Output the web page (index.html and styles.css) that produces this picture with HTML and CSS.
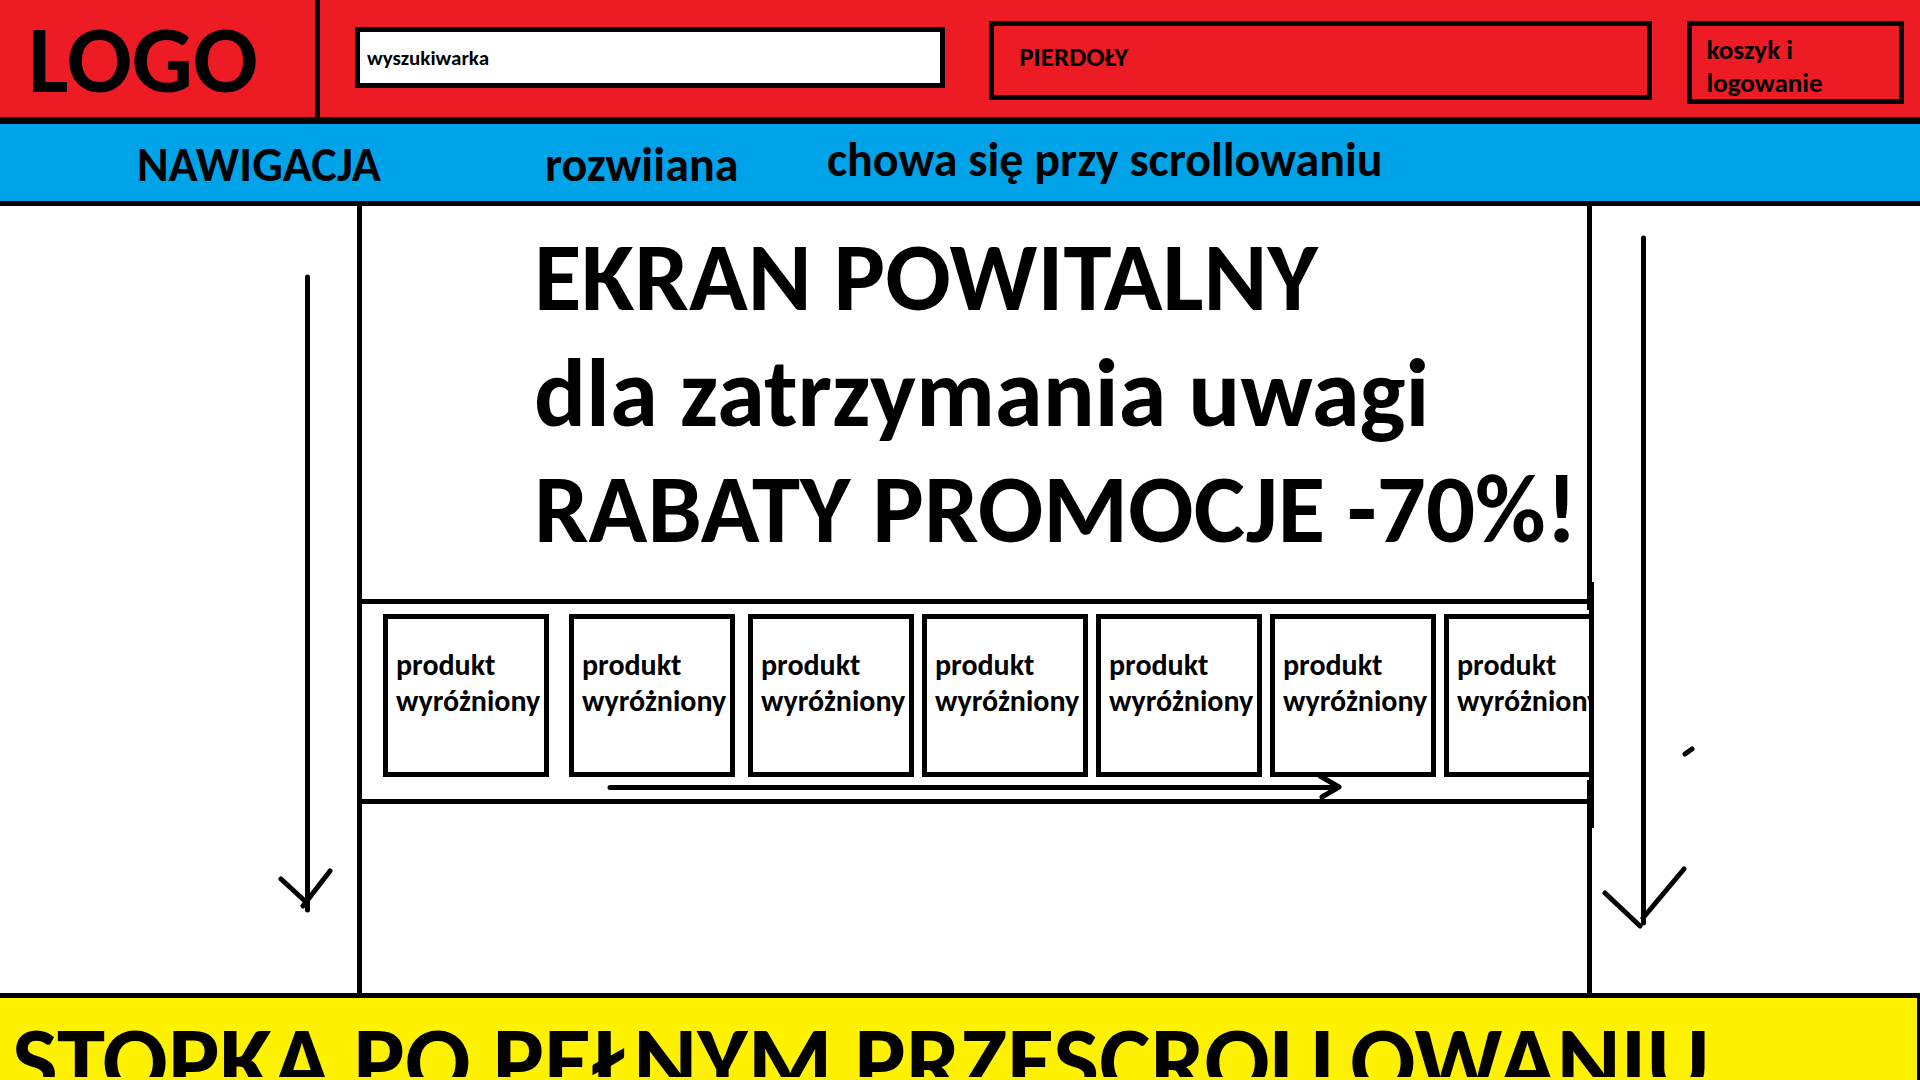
FILE: index.html
```html
<!DOCTYPE html>
<html lang="pl">
<head>
<meta charset="utf-8">
<meta name="viewport" content="width=device-width, initial-scale=1">
<title>LOGO</title>
<link rel="stylesheet" href="styles.css">
</head>
<body>
<header class="header">
  <a class="logo" href="#">LOGO</a>
  <input class="search" type="search" placeholder="wyszukiwarka" aria-label="wyszukiwarka">
  <div class="extras">PIERDOŁY</div>
  <a class="account" href="#">koszyk i logowanie</a>
</header>
<nav class="nav">
  <a class="nav-link nav-main" href="#">NAWIGACJA</a>
  <a class="nav-link nav-dropdown" href="#">rozwijana</a>
  <a class="nav-link nav-note" href="#">chowa się przy scrollowaniu</a>
</nav>
<main class="main">
  <aside class="side side-left">
    <svg class="stroke" width="58" height="642" viewBox="277 272 58 642" aria-hidden="true">
      <path d="M307.500 277V910M281 879L306 902M330 871L303 906"/>
    </svg>
  </aside>
  <div class="panel">
    <section class="hero">
      <h1 class="hero-line">EKRAN POWITALNY</h1>
      <p class="hero-line">dla zatrzymania uwagi</p>
      <p class="hero-line">RABATY PROMOCJE -70%!</p>
    </section>
    <section class="strip">
      <ul class="track">
        <li class="card">produkt wyróżniony</li>
        <li class="card">produkt wyróżniony</li>
        <li class="card">produkt wyróżniony</li>
        <li class="card">produkt wyróżniony</li>
        <li class="card">produkt wyróżniony</li>
        <li class="card">produkt wyróżniony</li>
        <li class="card">produkt wyróżniony</li>
      </ul>
      <svg class="stroke strip-arrow" viewBox="607 773 735 26" aria-hidden="true">
        <path d="M610 787.500H1338M1320 776L1339 787L1322 797"/>
      </svg>
    </section>
  </div>
  <aside class="side side-right">
    <svg class="stroke" width="100" height="696" viewBox="1600 234 100 696" aria-hidden="true">
      <path d="M1643.500 238V923M1605 893L1640 926M1684 869L1643 918M1685 754L1692 749"/>
    </svg>
  </aside>
</main>
<footer class="footer">
  <p class="footer-text">STOPKA PO PEŁNYM PRZESCROLLOWANIU</p>
</footer>
</body>
</html>
```
FILE: styles.css
```css
* {
  box-sizing: border-box;
}

body {
  display: flex;
  flex-direction: column;
  min-height: 100vh;
  margin: 0;
  overflow-x: hidden;
  background: #fff;
  color: #000;
  font-family: Calibri, Carlito, Lato, sans-serif;
  font-weight: 700;
}

a {
  color: inherit;
  text-decoration: none;
}

h1,
p,
ul {
  margin: 0;
  padding: 0;
  font-size: inherit;
}

/* Header */
.header {
  display: grid;
  grid-template-columns: 320px minmax(0, 589fr) minmax(0, 670fr) minmax(0, 217fr);
  column-gap: 35px;
  align-items: start;
  padding-right: 16px;
  border-bottom: 7px solid #000;
  background: #ed1c24;
}

.logo {
  padding: 12px 0 9px 28px;
  border-right: 5px solid #000;
  font-size: 96px;
  line-height: 96px;
}

.search {
  width: 100%;
  height: 61px;
  margin: 27px 0 0;
  padding: 0 7px;
  border: 5px solid #000;
  border-radius: 0;
  background: #fff;
  font: inherit;
  font-size: 21px;
  appearance: none;
}

.search::placeholder {
  color: #000;
  opacity: 1;
}

.extras {
  min-height: 79px;
  margin: 21px 0 0 9px;
  padding: 14px 25px;
  border: 5px solid #000;
  font-size: 27px;
  line-height: 33px;
}

.account {
  min-height: 83px;
  margin-top: 21px;
  padding: 7px 56px 0 15px;
  border: 5px solid #000;
  font-size: 27px;
  line-height: 33px;
}

/* Navigation */
.nav {
  display: flex;
  align-items: flex-end;
  padding: 12px 137px;
  height: 82px;
  border-bottom: 5px solid #000;
  background: #00a2e8;
  font-size: 48px;
  line-height: 48px;
  white-space: nowrap;
}

.nav-main {
  flex: 0 0 408px;
}

.nav-dropdown {
  flex: 0 0 282px;
  clip-path: inset(0 0 8px 0);
}

.nav-note {
  align-self: flex-start;
}

/* Content */
.main {
  display: grid;
  flex: 1;
  grid-template-columns: minmax(0, 357fr) minmax(0, 1235fr) minmax(0, 328fr);
}

.side {
  display: flex;
  align-items: flex-start;
}

.side-left {
  justify-content: flex-end;
  padding: 66px 22px 0 0;
}

.side-right {
  padding: 28px 0 0 8px;
}

.stroke {
  fill: none;
  stroke: #000;
  stroke-width: 5px;
  stroke-linecap: round;
  stroke-linejoin: round;
}

.panel {
  border: solid #000;
  border-width: 0 5px;
}

.hero {
  padding: 13px 0 32px 172px;
  font-size: 97px;
  line-height: 116px;
  white-space: nowrap;
}

.strip {
  position: relative;
  height: 205px;
  padding-top: 6px;
  border: solid #000;
  border-width: 5px 0;
}

.strip::before {
  content: "";
  position: absolute;
  top: -22px;
  bottom: -29px;
  left: calc(100% + 2px);
  width: 5px;
  background: #000;
}

.track {
  position: relative;
  display: flex;
  gap: 8px;
  height: 170px;
  margin-right: -7px;
  padding: 4px 0 0 21px;
  overflow: hidden;
  border-right: 5px solid #000;
  background: #fff;
  list-style: none;
}

.card {
  flex: 0 0 166px;
  height: 163px;
  padding: 28px 0 0 8px;
  border: 5px solid #000;
  font-size: 30px;
  line-height: 36px;
}

.card:nth-child(1) {
  margin-right: 12px;
}

.card:nth-child(2) {
  margin-right: 5px;
}

.strip-arrow {
  position: relative;
  display: block;
  width: 60%;
  margin: -7px 0 0 20%;
}

/* Footer */
.footer {
  padding: 15px 0 3px 12px;
  border: solid #000;
  border-width: 5px 3px 0 0;
  background: #fff200;
}

.footer-text {
  height: 64px;
  overflow: hidden;
  font-size: 97px;
  line-height: 96px;
  white-space: nowrap;
}
```
